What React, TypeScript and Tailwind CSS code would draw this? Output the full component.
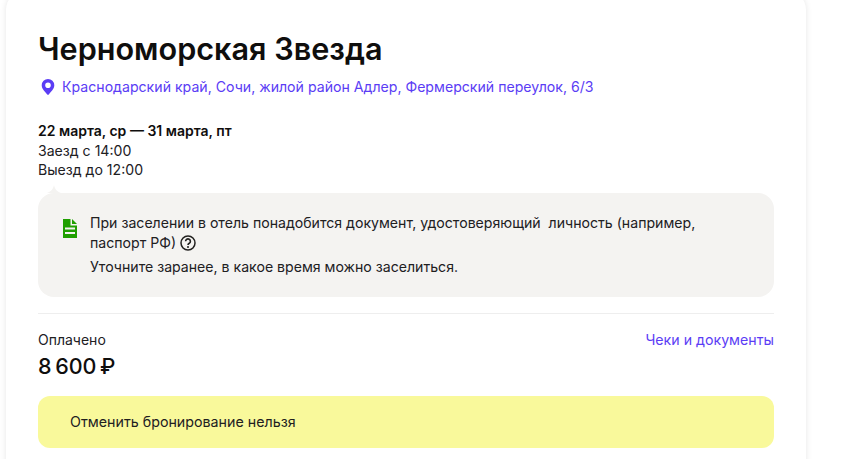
const FONT = { fontFamily: 'Inter, "Noto Sans", sans-serif' }

function PinIcon() {
  return (
    <svg width="14" height="16" viewBox="0 0 14 16" className="shrink-0">
      <path
        fillRule="evenodd"
        d="M7 0a6.300 6.300 0 0 1 6.300 6.300c0 3.700-3.500 6.600-5.300 9-.5.700-1.500.7-2 0C4.200 12.900.7 10 .7 6.300A6.300 6.300 0 0 1 7 0Zm0 3.500a2.800 2.800 0 1 0 0 5.600 2.800 2.800 0 0 0 0-5.600Z"
        fill="#5b3df5"
      />
    </svg>
  )
}

function DocIcon() {
  return (
    <svg width="14" height="19" viewBox="0 0 14 19" className="shrink-0">
      <path d="M0 0h7.500v6.500H14V19H0Z" fill="#1f9f00" />
      <path d="M9 0l5 5H9Z" fill="#1f9f00" />
      <path d="M2 8.500h10v2H2ZM2 13h10v2H2Z" fill="#f4f3f1" />
    </svg>
  )
}

function HelpIcon() {
  return (
    <svg width="16" height="16" viewBox="0 0 16 16" className="ml-1 inline-block align-[-3px]">
      <circle cx="8" cy="8" r="7" fill="none" stroke="#21201f" strokeWidth="1.500" />
      <path
        d="M5.600 6.300a2.400 2.400 0 1 1 3.700 2c-.9.500-1.300.9-1.300 1.700"
        fill="none"
        stroke="#21201f"
        strokeWidth="1.600"
      />
      <circle cx="8" cy="12" r="1" fill="#21201f" />
    </svg>
  )
}

export default function App() {
  return (
    <div className="h-[459px] w-[859px] overflow-hidden bg-white" style={FONT}>
      <div className="-mt-[10px] ml-[6px] h-[500px] w-[800px] rounded-[20px] bg-white px-8 pt-[37px] text-[#21201f] shadow-[0_0_6px_rgba(0,0,0,0.1)]">
        <h1 className="text-[30.600px] leading-[44px] font-semibold text-[#0f0e0d]">Черноморская Звезда</h1>

        <div className="mt-[6px] flex items-center gap-[7px] pl-[3px] text-[14.130px] leading-5 text-[#5b3df5]">
          <PinIcon />
          <span>Краснодарский край, Сочи, жилой район Адлер, Фермерский переулок, 6/3</span>
        </div>

        <div className="mt-[24px] text-[14.100px] leading-[19.500px]">
          <p className="text-[14px] font-semibold text-[#0f0e0d]">22 марта, ср — 31 марта, пт</p>
          <p>Заезд с 14:00</p>
          <p>Выезд до 12:00</p>
        </div>

        <div className="relative mt-[13px] flex h-[104px] gap-[13px] rounded-[16px] bg-[#f4f3f1] pt-[20px] pr-[60px] pl-[25px] text-[14.120px]">
          <svg width="14" height="8" viewBox="0 0 14 8" className="absolute -top-[8px] left-[9px]">
            <path d="M0 8C3 7 6 5 7 0c1 5 4 7 7 8Z" fill="#f4f3f1" />
          </svg>
          <div className="pt-[6px]">
            <DocIcon />
          </div>
          <div className="leading-[20px]">
            <p>
              При заселении в отель понадобится документ, удостоверяющий&nbsp; личность (например,
              паспорт РФ)
              <HelpIcon />
            </p>
            <p className="mt-[4px]">Уточните заранее, в какое время можно заселиться.</p>
          </div>
        </div>

        <div className="mt-4 border-t border-[#eeeeee] pt-4">
          <div className="flex items-start justify-between">
            <div>
              <p className="text-[14px] leading-5">Оплачено</p>
              <p className="mt-[3px] text-[21.500px] leading-[26px] font-medium tracking-[-0.2px] text-[#0f0e0d] [word-spacing:-1.500px]">
                8 600 ₽
              </p>
            </div>
            <a className="text-[14.200px] leading-5 text-[#5b3df5]">Чеки и документы</a>
          </div>
        </div>

        <div className="mt-[17px] flex h-[52px] items-center rounded-[12px] bg-[#f9f99b] px-8 text-[14.250px]">
          Отменить бронирование нельзя
        </div>
      </div>
    </div>
  )
}
